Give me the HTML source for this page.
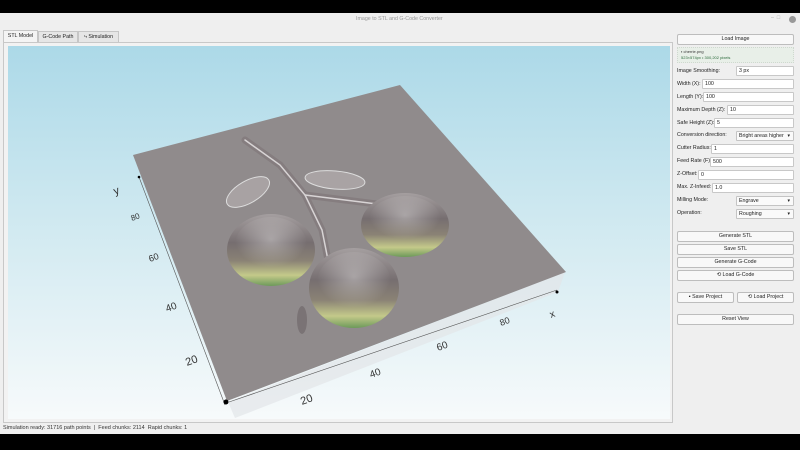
<!DOCTYPE html>
<html><head><style>
*{margin:0;padding:0;box-sizing:border-box}
body{width:800px;height:450px;background:#000;position:relative;overflow:hidden;font-family:"Liberation Sans",sans-serif;font-size:5.3px;color:#222}
.win{position:absolute;left:0;top:13px;width:800px;height:421px;background:#efefef}
.a{position:absolute}
.btn{position:absolute;left:677px;width:117px;height:11px;background:#f8f8f8;border:1px solid #bdbdbd;border-radius:2px;text-align:center;line-height:9px;font-size:5.3px;color:#222}
.lbl{position:absolute;left:677px;font-size:5.3px;line-height:9px;white-space:nowrap}
.inp{position:absolute;height:10px;background:#fff;border:1px solid #c8c8c8;border-radius:1px;right:6px;font-size:5.3px;line-height:8px;padding-left:2px}
.sel{position:absolute;left:736px;width:58px;height:10px;background:#fafafa;border:1px solid #c4c4c4;border-radius:1px;font-size:5.3px;line-height:8px;padding-left:2px;white-space:nowrap;overflow:hidden}
.sel:after{content:"▾";position:absolute;right:3px;top:0;font-size:5px;background:#fafafa}
.tab{position:absolute;top:31px;height:11px;border:1px solid #c6c6c6;border-bottom:none;background:#e6e6e6;font-size:5.3px;line-height:10px;text-align:center}
</style></head><body>
<div class="win">
<div class="a" style="left:356px;top:3px;color:#999;font-size:5.3px">Image to STL and G-Code Converter</div>
<div class="a" style="left:771px;top:2px;color:#aaa;font-size:5.3px">–&nbsp;&nbsp;□</div>
<div class="a" style="left:789px;top:3px;width:7px;height:7px;border-radius:50%;background:#999"></div>
</div>
<div class="tab" style="left:3px;width:35px;background:#f4f4f4;top:30px;height:12px">STL Model</div>
<div class="tab" style="left:38px;width:40px">G-Code Path</div>
<div class="tab" style="left:78px;width:41px">⤷ Simulation</div>
<div class="a" style="left:3px;top:42px;width:670px;height:381px;border:1px solid #c8c8c8;background:#f2f2f2"></div>
<svg class="a" style="left:8px;top:46px" width="662" height="373" viewBox="8 46 662 373">
<defs>
<linearGradient id="bg" x1="0" y1="0" x2="0" y2="1"><stop offset="0" stop-color="#acd9e8"/><stop offset="0.5" stop-color="#d2eaf1"/><stop offset="1" stop-color="#f7fafb"/></linearGradient>
<linearGradient id="ap" x1="0" y1="0" x2="0" y2="1"><stop offset="0" stop-color="#a59fa0"/><stop offset="0.4" stop-color="#766e70"/><stop offset="0.65" stop-color="#8a8275"/><stop offset="0.85" stop-color="#c4c98a"/><stop offset="1" stop-color="#6d9a5a"/></linearGradient>
<radialGradient id="hl" cx="0.5" cy="0.4" r="0.5"><stop offset="0" stop-color="#fff" stop-opacity="0.35"/><stop offset="1" stop-color="#fff" stop-opacity="0"/></radialGradient>
</defs>
<rect x="8" y="46" width="662" height="373" fill="url(#bg)"/>
<polygon points="228,402 565,272 558,292 235,418" fill="#e2e6e8" opacity="0.7"/>
<polygon points="133,155 400,85 566,272 227,401" fill="#908b8c"/>
<g stroke="#857d7f" stroke-width="7" fill="none" stroke-linecap="round">
<path d="M245 140 L280 165 L305 195 L322 230 L330 270"/>
<path d="M305 195 L385 205"/>
</g>
<g stroke="#d8d4d5" stroke-width="1.5" fill="none" stroke-linecap="round">
<path d="M245 140 L280 165 L305 195 L322 230 L330 270"/>
<path d="M305 195 L385 205"/>
</g>
<ellipse cx="248" cy="192" rx="24" ry="11" fill="#a8a2a3" stroke="#ddd" stroke-width="1" transform="rotate(-30 248 192)"/>
<ellipse cx="335" cy="180" rx="30" ry="9" fill="#a9a3a4" stroke="#ddd" stroke-width="1" transform="rotate(5 335 180)"/>
<ellipse cx="271" cy="250" rx="44" ry="36" fill="url(#ap)"/>
<ellipse cx="271" cy="245" rx="36" ry="28" fill="url(#hl)"/>
<ellipse cx="405" cy="225" rx="44" ry="32" fill="url(#ap)"/>
<ellipse cx="405" cy="220" rx="36" ry="24" fill="url(#hl)"/>
<ellipse cx="354" cy="288" rx="45" ry="40" fill="url(#ap)"/>
<ellipse cx="354" cy="283" rx="37" ry="31" fill="url(#hl)"/>
<ellipse cx="302" cy="320" rx="5" ry="14" fill="#7a7375"/>
<g stroke="#555" stroke-width="0.6" fill="none">
<path d="M139 177 L225 405"/>
<path d="M229 402 L557 290"/>
</g>
<circle cx="226" cy="402" r="2.5" fill="#000"/>
<circle cx="557" cy="292" r="1.5" fill="#000"/>
<circle cx="139" cy="177" r="1.3" fill="#000"/>
<g font-family="Liberation Sans" font-size="11" fill="#333">
<text x="115" y="195" transform="rotate(-20 115 195)">y</text>
<text x="132" y="221" font-size="8" transform="rotate(-20 132 221)">80</text>
<text x="150" y="262" font-size="9" transform="rotate(-20 150 262)">60</text>
<text x="167" y="312" font-size="10" transform="rotate(-20 167 312)">40</text>
<text x="187" y="366" font-size="11" transform="rotate(-20 187 366)">20</text>
<text x="302" y="405" font-size="11" transform="rotate(-20 302 405)">20</text>
<text x="371" y="378" font-size="10" transform="rotate(-20 371 378)">40</text>
<text x="438" y="351" font-size="10" transform="rotate(-20 438 351)">60</text>
<text x="501" y="326" font-size="9" transform="rotate(-20 501 326)">80</text>
<text x="551" y="318" font-size="10" transform="rotate(-20 551 318)">x</text>
</g>
</svg>
<div class="btn" style="top:34px">Load Image</div>
<div class="a" style="left:677px;top:47px;width:117px;height:16px;background:#e8efe8;border:1px dotted #cfd8cf;font-size:4px;line-height:6px;padding:1px 3px;color:#2a6a3a"><span style="color:#333">▪ cherrie.png</span><br>523×574px • 300,202 pixels</div>
<div class="lbl" style="top:67px">Image Smoothing:</div><div class="inp" style="left:736px;top:66px">3 px</div>
<div class="lbl" style="top:80px">Width (X):</div><div class="inp" style="left:702px;top:79px">100</div>
<div class="lbl" style="top:93px">Length (Y):</div><div class="inp" style="left:703px;top:92px">100</div>
<div class="lbl" style="top:106px">Maximum Depth (Z):</div><div class="inp" style="left:727px;top:105px">10</div>
<div class="lbl" style="top:119px">Safe Height (Z):</div><div class="inp" style="left:714px;top:118px">5</div>
<div class="lbl" style="top:131px">Conversion direction:</div><div class="sel" style="top:131px">Bright areas higher</div>
<div class="lbl" style="top:144px">Cutter Radius:</div><div class="inp" style="left:711px;top:144px">1</div>
<div class="lbl" style="top:157px">Feed Rate (F):</div><div class="inp" style="left:710px;top:157px">500</div>
<div class="lbl" style="top:170px">Z-Offset:</div><div class="inp" style="left:698px;top:170px">0</div>
<div class="lbl" style="top:183px">Max. Z-Infeed:</div><div class="inp" style="left:712px;top:183px">1.0</div>
<div class="lbl" style="top:196px">Milling Mode:</div><div class="sel" style="top:196px">Engrave</div>
<div class="lbl" style="top:209px">Operation:</div><div class="sel" style="top:209px">Roughing</div>
<div class="btn" style="top:231px">Generate STL</div>
<div class="btn" style="top:244px">Save STL</div>
<div class="btn" style="top:257px">Generate G-Code</div>
<div class="btn" style="top:270px">⟲ Load G-Code</div>
<div class="btn" style="top:292px;width:57px">▪ Save Project</div>
<div class="btn" style="top:292px;left:737px;width:57px">⟲ Load Project</div>
<div class="btn" style="top:314px">Reset View</div>
<div class="a" style="left:3px;top:425px;font-size:5.5px;color:#333">Simulation ready: 31716 path points &nbsp;| &nbsp;Feed chunks: 2114 &nbsp;Rapid chunks: 1</div>
</body></html>
